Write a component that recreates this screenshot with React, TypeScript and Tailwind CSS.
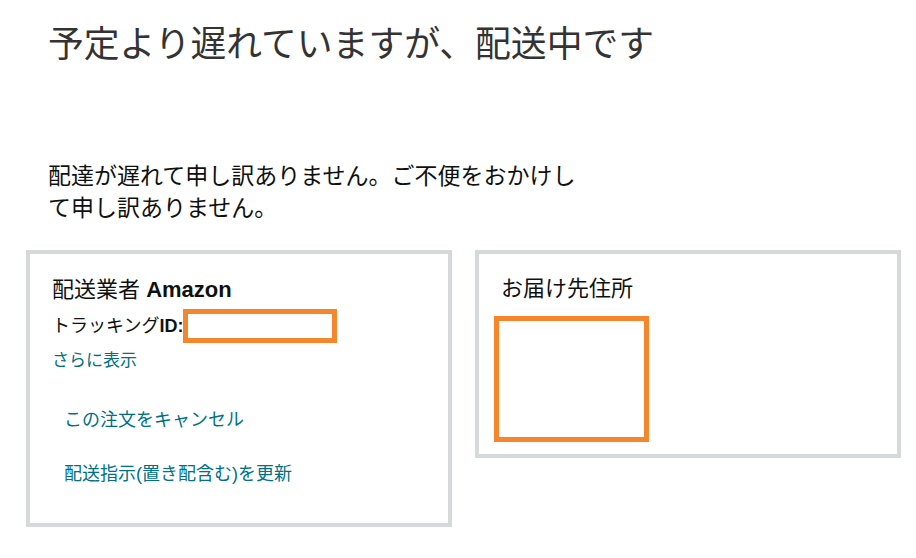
import React from 'react';

const FONT = "font-['Liberation_Sans','Noto_Sans_CJK_JP',sans-serif]";

const Redacted = ({ className }: { className: string }) => (
  <div className={`border-[5px] border-[#f5862b] bg-white shrink-0 ${className}`} />
);

const App: React.FC = () => {
  return (
    <div className={`w-[916px] h-[558px] overflow-hidden bg-white ${FONT}`}>
      <div className="pl-[26px]">
        {/* heading */}
        <h1 className="ml-[22px] pt-[28px] text-[35.8px] leading-none font-normal text-[#333333]">
          予定より遅れていますが、配送中です
        </h1>

        <p className="ml-[22px] mt-[96px] w-[540px] text-[23px] leading-[32px] text-[#0f1111]">
          配達が遅れて申し訳ありません。ご不便をおかけして申し訳ありません。
        </p>

        <div className="mt-[26px] flex items-start gap-[23px]">
          {/* carrier */}
          <div className="shrink-0 w-[426px] h-[277px] border-4 border-[#d5d9d9] pl-[22px] pt-[25px]">
            <h2 className="text-[22px] leading-none text-[#0f1111]">
              配送業者 <span className="font-bold">Amazon</span>
            </h2>
            <div className="mt-[8px] flex items-center">
              <span className="text-[18px] leading-none text-[#0f1111]">
                トラッキング<span className="font-bold">ID:</span>
              </span>
              <Redacted className="w-[154px] h-[34px]" />
            </div>
            <a className="mt-[9px] block text-[17px] leading-none text-[#007185]">さらに表示</a>
            <div className="pl-[12px] flex flex-col gap-[36px] mt-[42px]">
              <a className="block text-[18px] leading-none text-[#007185]">この注文をキャンセル</a>
              <a className="block text-[18px] leading-none text-[#007185]">配送指示(置き配含む)を更新</a>
            </div>
          </div>

          {/* address */}
          <div className="shrink-0 w-[426px] h-[208px] border-4 border-[#d5d9d9] pl-[15px] pt-[24px]">
            <h2 className="ml-[7px] text-[22px] leading-none text-[#0f1111]">お届け先住所</h2>
            <Redacted className="mt-[16px] w-[155px] h-[126px]" />
          </div>
        </div>
      </div>
    </div>
  );
};

export default App;
